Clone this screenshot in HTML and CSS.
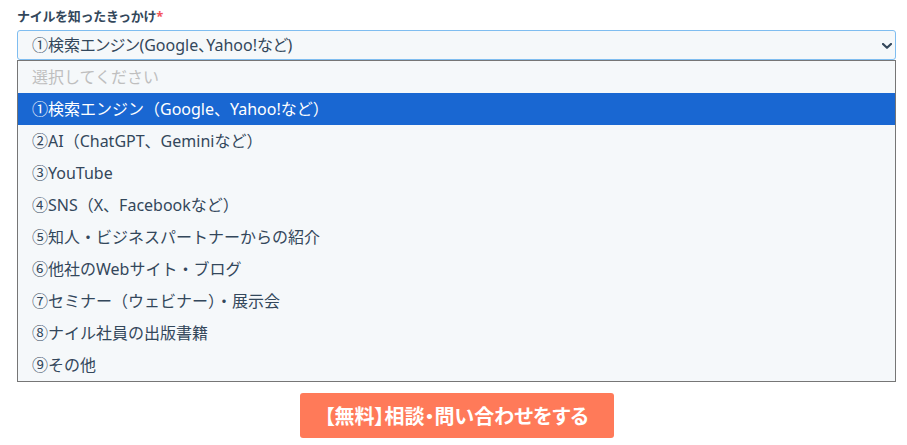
FILE: index.html
```html
<!DOCTYPE html>
<html lang="ja">
<head>
<meta charset="utf-8">
<link rel="stylesheet" href="styles.css">
</head>
<body>
<div class="form">
  <div class="field">
    <label class="label">ナイルを知ったきっかけ<span class="req">*</span></label>
    <div class="select">
      <span class="select-text">①検索エンジン(Google、Yahoo!など)</span>
      <svg class="chev" width="10" height="6" viewBox="0 0 10 6"><path d="M1 1 L5 4.8 L9 1" fill="none" stroke="#33475b" stroke-width="2.2" stroke-linecap="round" stroke-linejoin="round"/></svg>
    </div>
    <ul class="options">
      <li class="opt placeholder">選択してください</li>
      <li class="opt selected">①検索エンジン（Google、Yahoo!など）</li>
      <li class="opt">②AI（ChatGPT、Geminiなど）</li>
      <li class="opt">③YouTube</li>
      <li class="opt">④SNS（X、Facebookなど）</li>
      <li class="opt">⑤知人・ビジネスパートナーからの紹介</li>
      <li class="opt">⑥他社のWebサイト・ブログ</li>
      <li class="opt">⑦セミナー（ウェビナー）・展示会</li>
      <li class="opt">⑧ナイル社員の出版書籍</li>
      <li class="opt">⑨その他</li>
    </ul>
  </div>
  <div class="actions">
    <button class="submit">【無料】相談・問い合わせをする</button>
  </div>
</div>
</body>
</html>
```

FILE: styles.css
```css
html, body {
  margin: 0;
  padding: 0;
  background: #ffffff;
}
body {
  font-family: "Noto Sans", "Noto Sans CJK JP", sans-serif;
  color: #33475b;
}
.form {
  width: 879px;
  padding: 6px 0 0 17px;
}
.label {
  display: block;
  font-size: 13px;
  font-weight: 700;
  line-height: 20px;
  height: 24px;
  color: #33475b;
  letter-spacing: -0.3px;
}
.req {
  color: #f2545b;
  font-size: 13px;
}
.select {
  box-sizing: border-box;
  height: 30px;
  border: 1px solid #7fbdf0;
  border-radius: 3px;
  background: #f5f8fa;
  display: flex;
  align-items: center;
  justify-content: space-between;
  padding: 0 3px 0 14px;
}
.select-text {
  font-size: 16px;
  line-height: 20px;
  color: #33475b;
  font-feature-settings: "palt";
}
.chev {
  display: block;
  margin-top: 1px;
}
.options {
  list-style: none;
  margin: 0;
  padding: 0;
  border: 1px solid #767676;
  background: #f5f8fa;
}
.opt {
  height: 32px;
  line-height: 32px;
  font-size: 16px;
  padding-left: 14px;
  color: #33475b;
  white-space: nowrap;
}
.opt.placeholder {
  color: #bfbfbf;
}
.opt.selected {
  background: #1967d2;
  color: #ffffff;
}
.actions {
  display: flex;
  justify-content: center;
  padding-top: 11px;
}
.submit {
  width: 314px;
  height: 45px;
  border: none;
  border-radius: 3px;
  background: #ff7a59;
  color: #ffffff;
  font-family: "Noto Sans CJK JP", sans-serif;
  font-size: 20px;
  font-weight: 700;
  font-feature-settings: "palt";
  padding: 0;
}
```
